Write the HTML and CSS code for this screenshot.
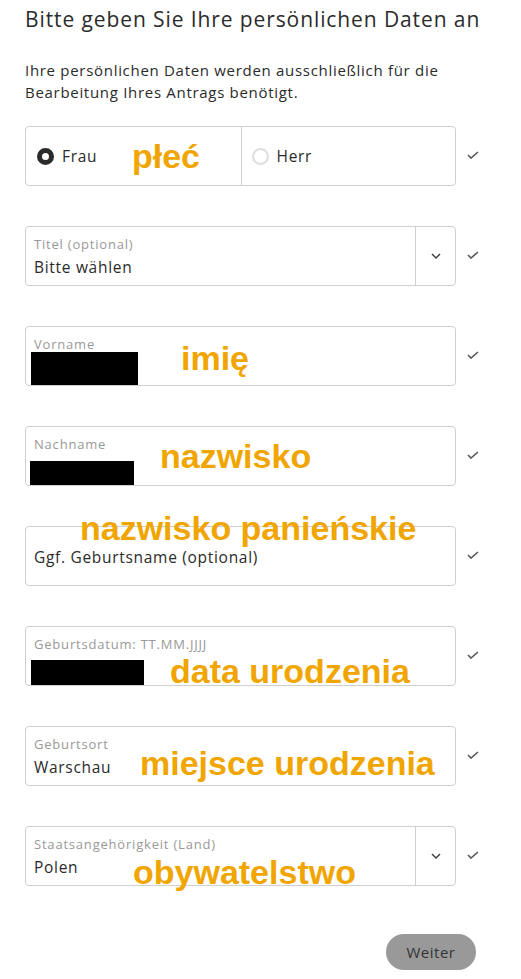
FILE: index.html
```html
<!DOCTYPE html>
<html lang="de">
<head>
<meta charset="utf-8">
<link rel="stylesheet" href="styles.css">
</head>
<body>
<div class="page">
  <h1 class="title">Bitte geben Sie Ihre persönlichen Daten an</h1>
  <p class="intro">Ihre persönlichen Daten werden ausschließlich für die Bearbeitung Ihres Antrags benötigt.</p>

  <div class="form">
    <div class="row">
      <div class="box gender">
        <div class="opt"><span class="radio on"></span><span class="val">Frau</span></div>
        <div class="opt sep"><span class="radio"></span><span class="val">Herr</span></div>
      </div>
      <svg class="check" width="12" height="8" viewBox="0 0 12 8"><path d="M1 4l3 3 7-6" fill="none" stroke="#555" stroke-width="1.6"/></svg>
      <span class="note n-plec">płeć</span>
    </div>

    <div class="row">
      <div class="box select">
        <div class="field"><span class="lbl">Titel (optional)</span><span class="val">Bitte wählen</span></div>
        <div class="arrow"><svg width="10" height="6" viewBox="0 0 10 6"><path d="M1 1l4 4 4-4" fill="none" stroke="#444" stroke-width="1.5"/></svg></div>
      </div>
      <svg class="check" width="12" height="8" viewBox="0 0 12 8"><path d="M1 4l3 3 7-6" fill="none" stroke="#555" stroke-width="1.6"/></svg>
    </div>

    <div class="row">
      <div class="box">
        <div class="field"><span class="lbl">Vorname</span><span class="redact r-vor"></span></div>
      </div>
      <svg class="check" width="12" height="8" viewBox="0 0 12 8"><path d="M1 4l3 3 7-6" fill="none" stroke="#555" stroke-width="1.6"/></svg>
      <span class="note n-imie">imię</span>
    </div>

    <div class="row">
      <div class="box">
        <div class="field"><span class="lbl">Nachname</span><span class="redact r-nach"></span></div>
      </div>
      <svg class="check" width="12" height="8" viewBox="0 0 12 8"><path d="M1 4l3 3 7-6" fill="none" stroke="#555" stroke-width="1.6"/></svg>
      <span class="note n-nazw">nazwisko</span>
    </div>

    <div class="row">
      <div class="box">
        <div class="field center"><span class="val">Ggf. Geburtsname (optional)</span></div>
      </div>
      <svg class="check" width="12" height="8" viewBox="0 0 12 8"><path d="M1 4l3 3 7-6" fill="none" stroke="#555" stroke-width="1.6"/></svg>
      <span class="note n-pan">nazwisko panieńskie</span>
    </div>

    <div class="row">
      <div class="box">
        <div class="field"><span class="lbl">Geburtsdatum: TT.MM.JJJJ</span><span class="redact r-geb"></span></div>
      </div>
      <svg class="check" width="12" height="8" viewBox="0 0 12 8"><path d="M1 4l3 3 7-6" fill="none" stroke="#555" stroke-width="1.6"/></svg>
      <span class="note n-data">data urodzenia</span>
    </div>

    <div class="row">
      <div class="box">
        <div class="field"><span class="lbl">Geburtsort</span><span class="val">Warschau</span></div>
      </div>
      <svg class="check" width="12" height="8" viewBox="0 0 12 8"><path d="M1 4l3 3 7-6" fill="none" stroke="#555" stroke-width="1.6"/></svg>
      <span class="note n-miej">miejsce urodzenia</span>
    </div>

    <div class="row">
      <div class="box select">
        <div class="field"><span class="lbl">Staatsangehörigkeit (Land)</span><span class="val">Polen</span></div>
        <div class="arrow"><svg width="10" height="6" viewBox="0 0 10 6"><path d="M1 1l4 4 4-4" fill="none" stroke="#444" stroke-width="1.5"/></svg></div>
      </div>
      <svg class="check" width="12" height="8" viewBox="0 0 12 8"><path d="M1 4l3 3 7-6" fill="none" stroke="#555" stroke-width="1.6"/></svg>
      <span class="note n-oby">obywatelstwo</span>
    </div>
  </div>

  <div class="actions">
    <button class="btn">Weiter</button>
  </div>
</div>
</body>
</html>
```

FILE: styles.css
```css
* { box-sizing: border-box; }
body {
  margin: 0;
  background: #fff;
  font-family: "Open Sans", Lato, sans-serif;
  color: #2b2b2b;
}
.page {
  width: 521px;
  padding: 5px 0 0 25px;
}
.title {
  margin: 0;
  font-size: 21px;
  font-weight: 400;
  line-height: 28px;
  color: #2b2b2b;
  letter-spacing: 0.9px;
  white-space: nowrap;
}
.intro {
  margin: 26px 0 0;
  width: 450px;
  font-size: 15px;
  line-height: 22px;
  color: #2b2b2b;
  letter-spacing: 0.7px;
}
.form {
  margin-top: 23px;
  display: flex;
  flex-direction: column;
  gap: 40px;
}
.row {
  position: relative;
  display: flex;
  align-items: center;
  gap: 11px;
}
.box {
  width: 431px;
  height: 60px;
  border: 1px solid #cfcfcf;
  border-radius: 4px;
  display: flex;
}
.check { margin-top: -2px; }
.gender .opt {
  flex: 1;
  display: flex;
  align-items: center;
  padding-left: 11px;
  gap: 8px;
}
.gender .opt.sep {
  border-left: 1px solid #cfcfcf;
  padding-left: 10px;
}
.radio {
  width: 17px;
  height: 17px;
  border-radius: 50%;
  border: 2px solid #dedede;
}
.radio.on {
  border: 5px solid #2b2b2b;
  background: #fff;
}
.field {
  flex: 1;
  display: flex;
  flex-direction: column;
  padding: 9px 0 0 8px;
  overflow: hidden;
}
.field.center {
  justify-content: center;
  padding-top: 2px;
}
.lbl {
  font-size: 13px;
  line-height: 16px;
  color: #999;
  letter-spacing: 0.8px;
  white-space: nowrap;
}
.val {
  font-size: 15.5px;
  line-height: 20px;
  color: #2b2b2b;
  letter-spacing: 0.7px;
  white-space: nowrap;
}
.field .lbl + .val { margin-top: 5px; }
.select .arrow {
  width: 40px;
  border-left: 1px solid #cfcfcf;
  display: flex;
  align-items: center;
  justify-content: center;
}
.redact {
  display: block;
  background: #000;
}
.r-vor { width: 107px; height: 33px; margin: 0 0 0 -3px; }
.r-nach { width: 104px; height: 29px; margin: 9px 0 0 -4px; }
.r-geb { width: 113px; height: 30px; margin: 8px 0 0 -3px; }
.note {
  position: absolute;
  font-family: "Liberation Sans", Arial, sans-serif;
  font-weight: 700;
  font-size: 34px;
  line-height: 30px;
  color: #f0a500;
  white-space: nowrap;
}
.n-plec { left: 107px; top: 15px; }
.n-imie { left: 156px; top: 17px; }
.n-nazw { left: 135px; top: 15px; }
.n-pan { left: 55px; top: -13px; }
.n-data { left: 145px; top: 30px; }
.n-miej { left: 115px; top: 22px; }
.n-oby { left: 108px; top: 31px; }
.actions {
  display: flex;
  justify-content: flex-end;
  width: 451px;
  margin-top: 48px;
}
.btn {
  width: 90px;
  height: 36px;
  border: none;
  border-radius: 18px;
  background: #999;
  color: #333;
  font-family: "Open Sans", Lato, sans-serif;
  font-size: 15px;
  letter-spacing: 0.5px;
}
```
